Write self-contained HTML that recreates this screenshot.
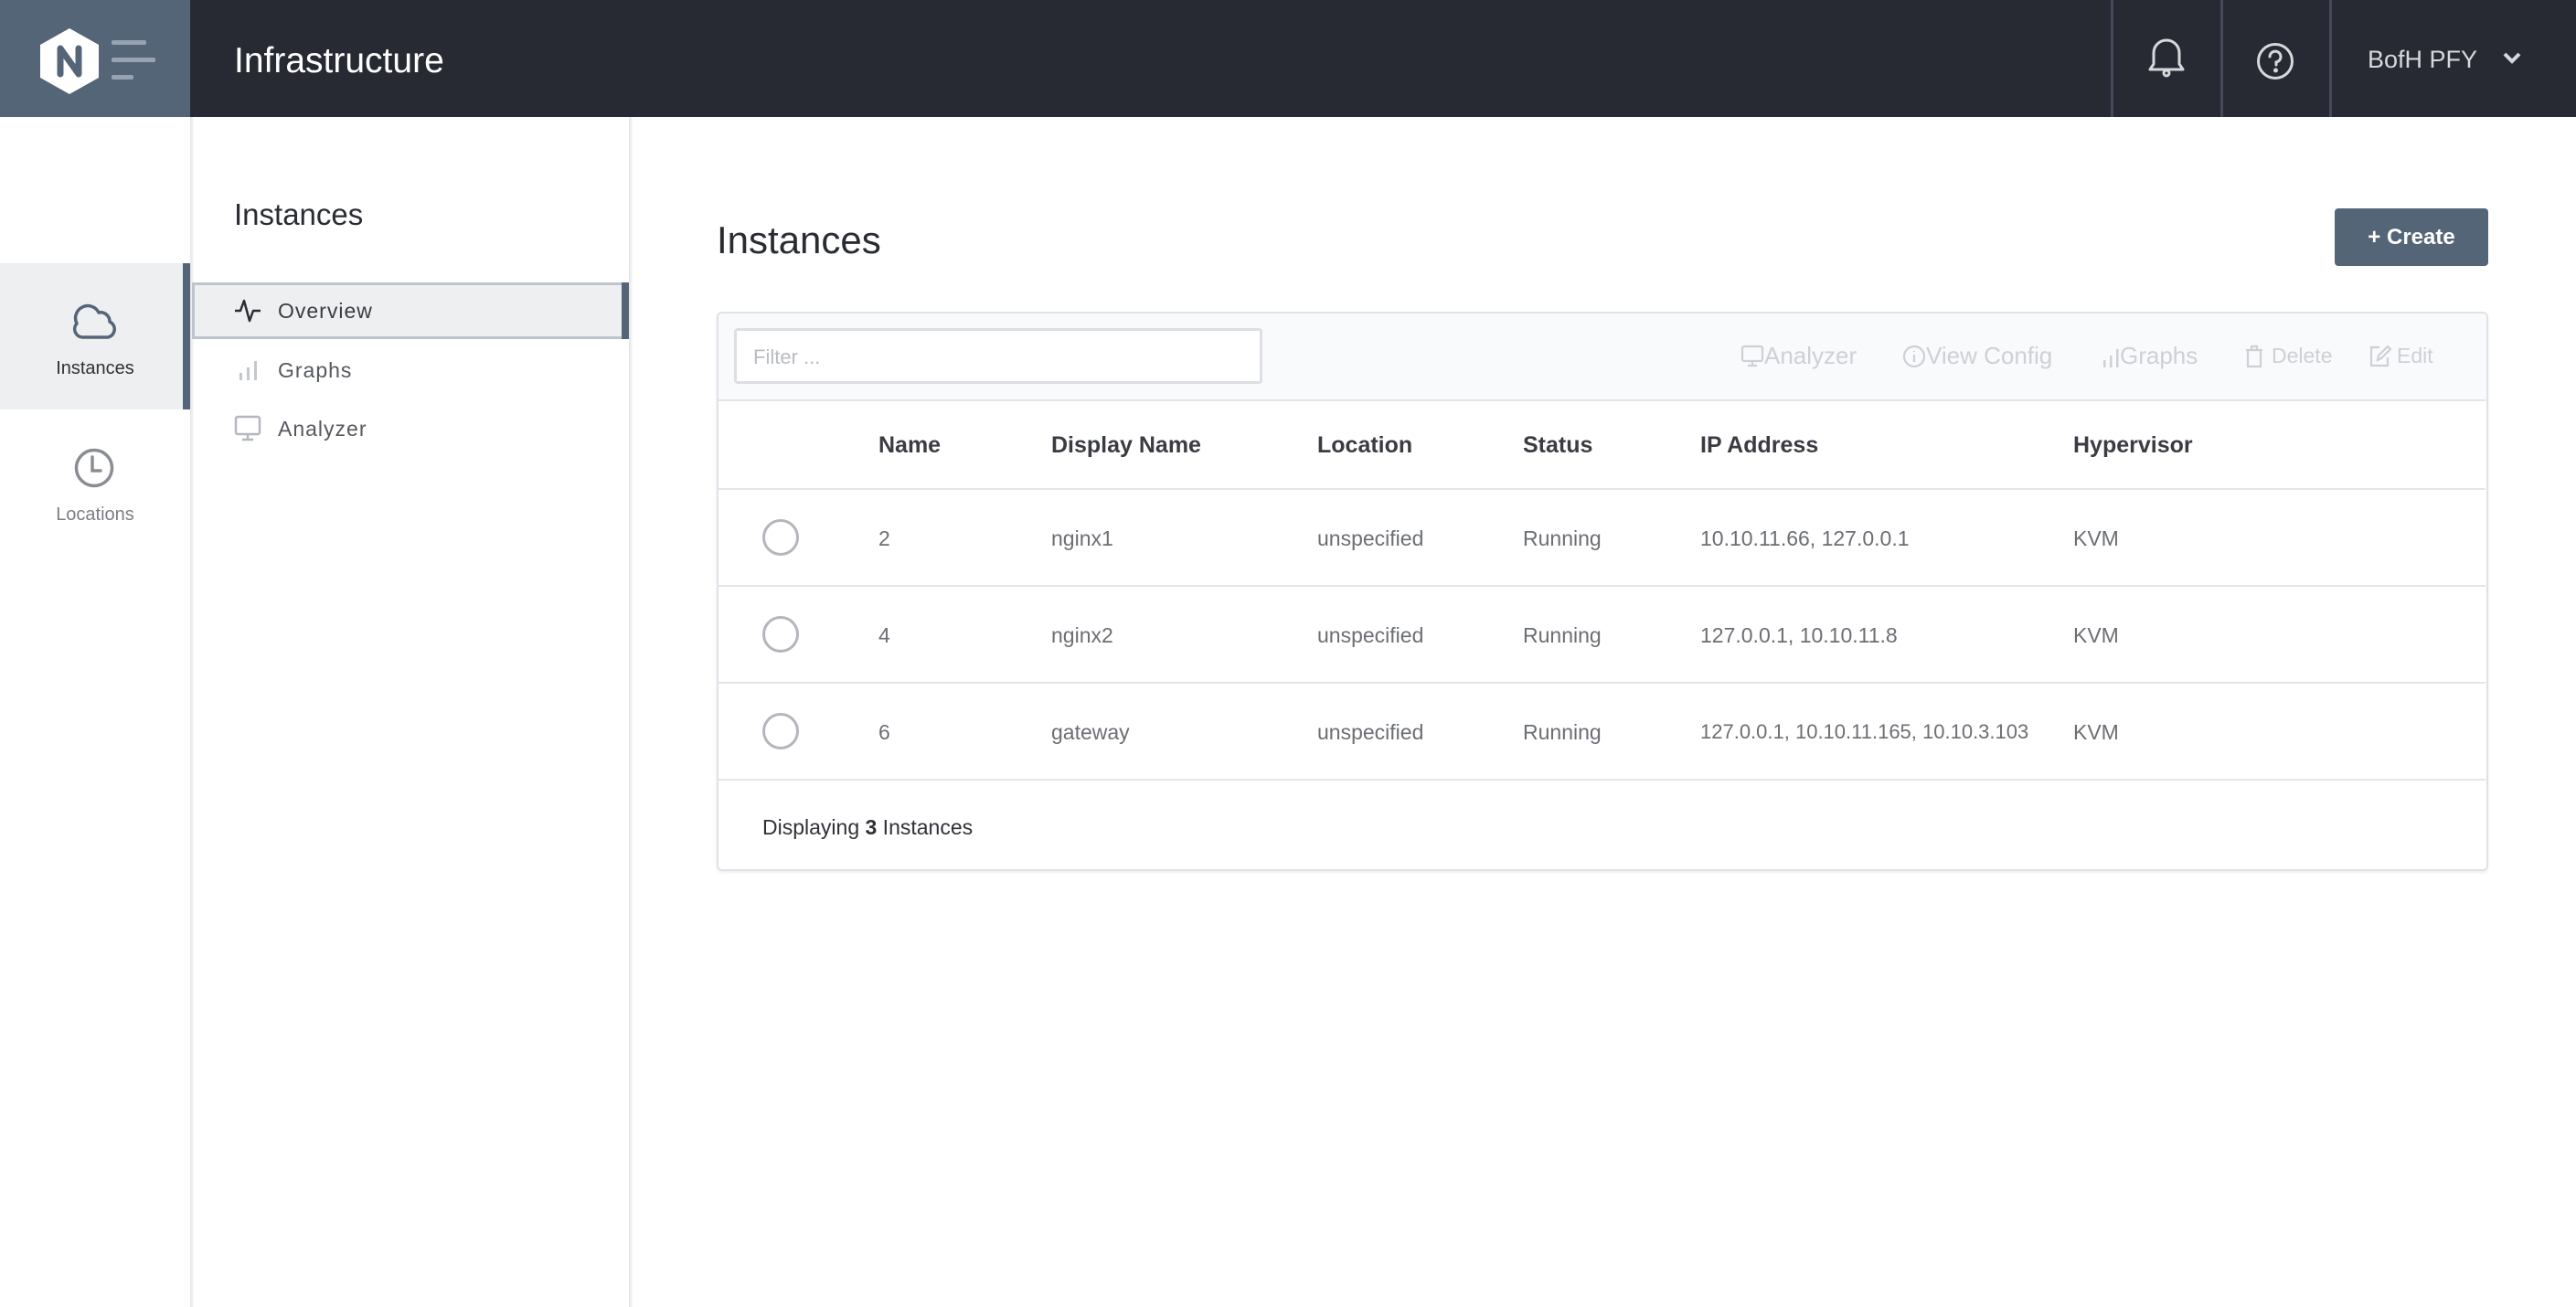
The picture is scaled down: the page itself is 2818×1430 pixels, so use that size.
<!DOCTYPE html>
<html><head><meta charset="utf-8"><style>
*{margin:0;padding:0;box-sizing:border-box}
body{width:2818px;height:1430px;background:#fff;font-family:"Liberation Sans",sans-serif;position:relative;overflow:hidden}
.a{position:absolute}
.hdr{left:0;top:0;width:2818px;height:128px;background:#282a33}
.logo{left:0;top:0;width:208px;height:128px;background:#556578}
.sep{top:0;width:3px;height:128px;background:#454a5a}
.t{white-space:nowrap}
.th{font-size:25px;color:#3a3c42;font-weight:bold;top:473px}
.td{font-size:23px;color:#6b6e73}
.rowline{left:786px;width:1933px;height:2px;background:#e3e5ea}
.radio{left:834px;width:40px;height:40px;border:3px solid #b3b6bb;border-radius:50%}
.tb{font-size:26px;color:#cdd0d6;top:374px}
</style></head><body>
<div class="a hdr"></div>
<div class="a logo"></div>
<svg class="a" style="left:44px;top:29px" width="130" height="76" viewBox="0 0 130 76">
<polygon points="32,2 64,20 64,56 32,74 0,56 0,20" fill="#fff"/>
<path d="M22,52 V24 L42,52 V24" stroke="#556578" stroke-width="7" fill="none" stroke-linecap="round" stroke-linejoin="round"/>
<rect x="78" y="15" width="38" height="5" rx="2" fill="#98a3b1"/>
<rect x="78" y="34" width="48" height="5" rx="2" fill="#98a3b1"/>
<rect x="78" y="53" width="24" height="5" rx="2" fill="#98a3b1"/>
</svg>
<div class="a t" style="left:256px;top:45px;font-size:39px;color:#fff">Infrastructure</div>
<div class="a sep" style="left:2309px"></div>
<div class="a sep" style="left:2429px"></div>
<div class="a sep" style="left:2548px"></div>
<svg class="a" style="left:2348px;top:42px" width="44" height="44" viewBox="0 0 44 44" fill="none" stroke="#d7d8dc" stroke-width="3" stroke-linejoin="round">
<path d="M4,34 L8,28 V16 A14,14 0 0 1 36,16 V28 L40,34 Z"/><circle cx="22" cy="38" r="3"/></svg>
<svg class="a" style="left:2468px;top:46px" width="42" height="42" viewBox="0 0 42 42" fill="none" stroke="#d7d8dc" stroke-width="3">
<circle cx="21" cy="21" r="18.5"/><path d="M15,16 A6,6 0 1 1 22,22 V25" stroke-linecap="round"/><circle cx="21.5" cy="31" r="1" fill="#d7d8dc"/></svg>
<div class="a t" style="left:2590px;top:50px;font-size:27px;color:#d7d8dc">BofH PFY</div>
<svg class="a" style="left:2737px;top:56px" width="22" height="16" viewBox="0 0 22 16"><path d="M3,3 L11,11 L19,3" stroke="#d7d8dc" stroke-width="4" fill="none"/></svg>

<div class="a" style="left:208px;top:128px;width:4px;height:1302px;background:linear-gradient(90deg,#e2e3e6,#fafafa)"></div>
<div class="a" style="left:688px;top:128px;width:4px;height:1302px;background:linear-gradient(90deg,#e2e3e6,#fafafa)"></div>
<div class="a" style="left:0;top:288px;width:208px;height:160px;background:#eeeff1"></div>
<div class="a" style="left:200px;top:288px;width:8px;height:160px;background:#556578"></div>
<svg class="a" style="left:78px;top:332px" width="50" height="40" viewBox="0 0 50 40"><path d="M12,37 A9,9 0 0 1 6,22 A13,13 0 0 1 30,10 A10,10 0 0 1 42,20 A9,9 0 0 1 40,37 Z" fill="none" stroke="#556578" stroke-width="3.5" stroke-linejoin="round"/></svg>
<div class="a t" style="left:0;width:208px;text-align:center;top:392px;font-size:20px;color:#2f3137">Instances</div>
<svg class="a" style="left:81px;top:489px" width="44" height="46" viewBox="0 0 44 46" fill="none" stroke="#8a8d93" stroke-width="3.5"><circle cx="22" cy="23" r="19.5"/><path d="M20,11 V26 H29" stroke-linecap="round"/></svg>
<div class="a t" style="left:0;width:208px;text-align:center;top:552px;font-size:20px;color:#7b7e84">Locations</div>

<div class="a t" style="left:256px;top:216px;font-size:33px;color:#2a2c33">Instances</div>
<div class="a" style="left:210px;top:309px;width:478px;height:62px;background:#eeeff1;border:3px solid #bfc5cd;border-right:none"></div>
<div class="a" style="left:680px;top:309px;width:8px;height:62px;background:#556578"></div>
<svg class="a" style="left:256px;top:326px" width="30" height="28" viewBox="0 0 30 28"><path d="M1,14 H7 L11,3 L17,25 L21,14 H29" fill="none" stroke="#2a2c33" stroke-width="2.5" stroke-linejoin="round"/></svg>
<div class="a t" style="left:304px;top:327px;font-size:23px;color:#3a3c42;letter-spacing:1px">Overview</div>
<svg class="a" style="left:260px;top:393px" width="24" height="24" viewBox="0 0 24 24" fill="#c4c7cc"><rect x="2" y="15" width="3" height="8"/><rect x="10" y="9" width="3" height="14"/><rect x="18" y="2" width="3" height="21"/></svg>
<div class="a t" style="left:304px;top:392px;font-size:23px;color:#55585e;letter-spacing:1px">Graphs</div>
<svg class="a" style="left:256px;top:454px" width="30" height="30" viewBox="0 0 30 30" fill="none" stroke="#b5b8be" stroke-width="2.5"><rect x="2" y="2" width="26" height="19" rx="2"/><path d="M15,21 V27 M9,27 H21"/></svg>
<div class="a t" style="left:304px;top:456px;font-size:23px;color:#55585e;letter-spacing:1px">Analyzer</div>

<div class="a t" style="left:784px;top:239px;font-size:42px;color:#2a2c33">Instances</div>
<div class="a" style="left:2554px;top:228px;width:168px;height:63px;background:#556578;border-radius:4px;color:#fff;font-size:24px;font-weight:bold;text-align:center;line-height:63px">+ Create</div>

<div class="a" style="left:784px;top:341px;width:1938px;height:612px;border:2px solid #e0e2e7;border-radius:6px;box-shadow:0 2px 3px #eceef1"></div>
<div class="a" style="left:786px;top:343px;width:1934px;height:94px;background:#f9fafb;border-radius:5px 5px 0 0"></div>
<div class="a rowline" style="top:437px"></div>
<div class="a" style="left:803px;top:359px;width:578px;height:61px;border:3px solid #dcdfe4;border-radius:4px;background:#fff"></div>
<div class="a t" style="left:824px;top:378px;font-size:22px;color:#b9bcc2">Filter ...</div>

<svg class="a" style="left:1904px;top:377px" width="26" height="26" viewBox="0 0 26 26" fill="none" stroke="#cdd0d6" stroke-width="2.2"><rect x="2" y="2" width="22" height="16" rx="2"/><path d="M13,18 V23 M8,23 H18"/></svg>
<div class="a t tb" style="left:1930px">Analyzer</div>
<svg class="a" style="left:2081px;top:377px" width="26" height="26" viewBox="0 0 26 26" fill="none" stroke="#cdd0d6" stroke-width="2.2"><circle cx="13" cy="13" r="11"/><path d="M13,11 V19 M13,7 V8"/></svg>
<div class="a t tb" style="left:2107px">View Config</div>
<svg class="a" style="left:2300px;top:380px" width="20" height="22" viewBox="0 0 20 22" fill="#cdd0d6"><rect x="1" y="14" width="2.5" height="8"/><rect x="8" y="9" width="2.5" height="13"/><rect x="15" y="2" width="2.5" height="20"/></svg>
<div class="a t tb" style="left:2319px">Graphs</div>
<svg class="a" style="left:2455px;top:377px" width="22" height="26" viewBox="0 0 22 26" fill="none" stroke="#cdd0d6" stroke-width="2.2"><path d="M2,6 H20 M8,6 V2 H14 V6 M4,6 V24 H18 V6"/></svg>
<div class="a t tb" style="left:2485px;font-size:23px;top:376px">Delete</div>
<svg class="a" style="left:2591px;top:377px" width="26" height="26" viewBox="0 0 26 26" fill="none" stroke="#cdd0d6" stroke-width="2.2"><path d="M12,3 H3 V23 H21 V14 M10,17 L11,12 L21,2 L24,5 L14,15 Z"/></svg>
<div class="a t tb" style="left:2622px;font-size:23px;top:376px">Edit</div>

<div class="a t th" style="left:961px">Name</div>
<div class="a t th" style="left:1150px">Display Name</div>
<div class="a t th" style="left:1441px">Location</div>
<div class="a t th" style="left:1666px">Status</div>
<div class="a t th" style="left:1860px">IP Address</div>
<div class="a t th" style="left:2268px">Hypervisor</div>
<div class="a rowline" style="top:534px"></div>

<div class="a radio" style="top:568px"></div>
<div class="a t td" style="left:961px;top:576px">2</div>
<div class="a t td" style="left:1150px;top:576px">nginx1</div>
<div class="a t td" style="left:1441px;top:576px">unspecified</div>
<div class="a t td" style="left:1666px;top:576px">Running</div>
<div class="a t td" style="left:1860px;top:576px">10.10.11.66, 127.0.0.1</div>
<div class="a t td" style="left:2268px;top:576px">KVM</div>
<div class="a rowline" style="top:640px"></div>

<div class="a radio" style="top:674px"></div>
<div class="a t td" style="left:961px;top:682px">4</div>
<div class="a t td" style="left:1150px;top:682px">nginx2</div>
<div class="a t td" style="left:1441px;top:682px">unspecified</div>
<div class="a t td" style="left:1666px;top:682px">Running</div>
<div class="a t td" style="left:1860px;top:682px">127.0.0.1, 10.10.11.8</div>
<div class="a t td" style="left:2268px;top:682px">KVM</div>
<div class="a rowline" style="top:746px"></div>

<div class="a radio" style="top:780px"></div>
<div class="a t td" style="left:961px;top:788px">6</div>
<div class="a t td" style="left:1150px;top:788px">gateway</div>
<div class="a t td" style="left:1441px;top:788px">unspecified</div>
<div class="a t td" style="left:1666px;top:788px">Running</div>
<div class="a t td" style="left:1860px;top:788px;font-size:22px">127.0.0.1, 10.10.11.165, 10.10.3.103</div>
<div class="a t td" style="left:2268px;top:788px">KVM</div>
<div class="a rowline" style="top:852px"></div>

<div class="a t" style="left:834px;top:892px;font-size:23px;color:#2f3137">Displaying <b>3</b> Instances</div>
</body></html>
